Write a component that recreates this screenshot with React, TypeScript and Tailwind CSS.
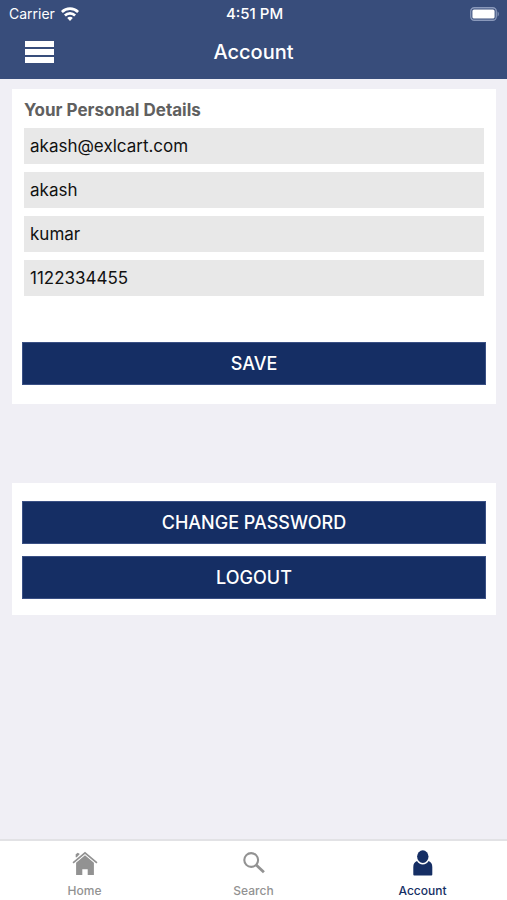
import { type ReactNode } from "react";

const FIELDS = [
  { id: "email", label: "Email", type: "email", value: "akash@exlcart.com" },
  { id: "first-name", label: "First name", type: "text", value: "akash" },
  { id: "last-name", label: "Last name", type: "text", value: "kumar" },
  { id: "phone", label: "Phone", type: "tel", value: "1122334455" },
];

function WifiIcon() {
  return (
    <svg viewBox="0 0 18 14" className="h-[14px] w-[18px]" fill="none" stroke="currentColor" strokeWidth="2.6" aria-hidden="true">
      <path d="M0.9 5a11.5 11.5 0 0 1 16.200 0" />
      <path d="M3.900 8.500a7.200 7.200 0 0 1 10.200 0" />
      <path d="M6.200 11 9 14l2.800-3a3.900 3.900 0 0 0-5.600 0z" fill="currentColor" stroke="none" />
    </svg>
  );
}

function BatteryIcon() {
  return (
    <svg viewBox="0 0 30 14" className="h-[14px] w-[30px]" aria-hidden="true">
      <rect x="0.75" y="0.75" width="25.5" height="12.5" rx="3.5" fill="none" stroke="#8a99bb" strokeWidth="1.3" />
      <rect x="2.4" y="2.4" width="22.2" height="9.2" rx="1.6" fill="#fff" />
      <path d="M27.600 4.300v5.400a3.600 3.600 0 0 0 0-5.400z" fill="#8a99bb" />
    </svg>
  );
}

function MenuIcon() {
  return (
    <svg viewBox="0 0 29 22" className="h-[22px] w-[29px]" fill="currentColor" aria-hidden="true">
      <rect width="29" height="6" />
      <rect y="8" width="29" height="6" />
      <rect y="16" width="29" height="6" />
    </svg>
  );
}

function HomeIcon() {
  return (
    <svg viewBox="0 0 26 26" className="size-[26px]" fill="currentColor" aria-hidden="true">
      <path d="M13 1.700 0.500 12.300l1.100 1.300L13 4l11.400 9.600 1.100-1.300z" />
      <path d="M13 5.200 4.100 12.700V25h6.200v-5.800h5.400V25h6.200V12.700z" />
      <path d="M3.700 4.300 5.800 2.800l2 1.300-3 3.200H3.700z" />
    </svg>
  );
}

function SearchIcon() {
  return (
    <svg viewBox="0 0 26 26" className="size-[26px]" fill="none" stroke="currentColor" aria-hidden="true">
      <circle cx="10.2" cy="10" r="6.9" strokeWidth="2.1" />
      <path d="m15 14.800 7.900 7.500" strokeWidth="2.8" />
    </svg>
  );
}

function PersonIcon() {
  return (
    <svg viewBox="0 0 26 26" className="size-[26px]" fill="currentColor" aria-hidden="true">
      <ellipse cx="12.8" cy="6.6" rx="5.7" ry="6.3" />
      <path d="M7 11.100C4.500 12.200 3.300 14 3.300 17v7.500c0 .6.300.9.900.9h17.200c.6 0 .9-.3.900-.9V17c0-3-1.200-4.800-3.700-5.900-1.300 2.300-3.200 3.500-5.800 3.500s-4.500-1.200-5.800-3.500z" />
    </svg>
  );
}

function PrimaryButton({ children }: { children: ReactNode }) {
  return (
    <button type="submit" className="h-[43px] w-full border border-[#3a5084] bg-[#152e64] text-lg font-medium text-white">
      {children}
    </button>
  );
}

function Tab({ label, icon, active = false }: { label: string; icon: ReactNode; active?: boolean }) {
  return (
    <a
      href="#"
      aria-current={active ? "page" : undefined}
      className={`flex flex-1 flex-col items-center pt-[9px] ${active ? "text-[#152e64]" : "text-[#929292]"}`}
    >
      {icon}
      <span className="mt-[7px] text-xs leading-4 font-medium">{label}</span>
    </a>
  );
}

export default function App() {
  return (
    <div className="flex min-h-screen flex-col bg-[#f0eff5] font-['Inter','Liberation_Sans',sans-serif]">
      <header className="bg-[#384d7b] text-white">
        <div className="grid h-[27px] grid-cols-3 items-center pr-[7px] pl-[9px] text-sm">
          <div className="flex items-center gap-[6px]">
            <span>Carrier</span>
            <WifiIcon />
          </div>
          <span className="text-center text-[15px] leading-5 font-medium">4:51 PM</span>
          <div className="flex justify-end">
            <BatteryIcon />
          </div>
        </div>
        <div className="grid h-[52px] grid-cols-3 items-center px-[25px] pb-[2px]">
          <button type="button" aria-label="Menu" className="justify-self-start">
            <MenuIcon />
          </button>
          <h1 className="text-center text-xl font-medium">Account</h1>
        </div>
      </header>

      <main className="flex flex-1 flex-col pt-[10px] pr-[11px] pl-3">
        <form className="bg-white px-[10px] pt-[10px] pb-[19px]" onSubmit={(e) => e.preventDefault()}>
          <div className="px-[2px]">
            <h2 className="text-[17px] leading-[22px] font-bold text-[#606060]">Your Personal Details</h2>
            <div className="mt-[7px] flex flex-col gap-2">
              {FIELDS.map((f) => (
                <input
                  key={f.id}
                  id={f.id}
                  type={f.type}
                  aria-label={f.label}
                  defaultValue={f.value}
                  className="h-9 w-full bg-[#e8e8e8] px-[6px] text-[17px] text-[#111111]"
                />
              ))}
            </div>
          </div>
          <div className="mt-[46px]">
            <PrimaryButton>SAVE</PrimaryButton>
          </div>
        </form>

        <form className="mt-[79px] flex flex-col gap-3 bg-white px-[10px] pt-[18px] pb-4" onSubmit={(e) => e.preventDefault()}>
          <PrimaryButton>CHANGE PASSWORD</PrimaryButton>
          <PrimaryButton>LOGOUT</PrimaryButton>
        </form>
      </main>

      <nav aria-label="Main" className="flex h-[61px] border-t-2 border-[#e2e2e5] bg-white">
        <Tab label="Home" icon={<HomeIcon />} />
        <Tab label="Search" icon={<SearchIcon />} />
        <Tab label="Account" icon={<PersonIcon />} active />
      </nav>
    </div>
  );
}
